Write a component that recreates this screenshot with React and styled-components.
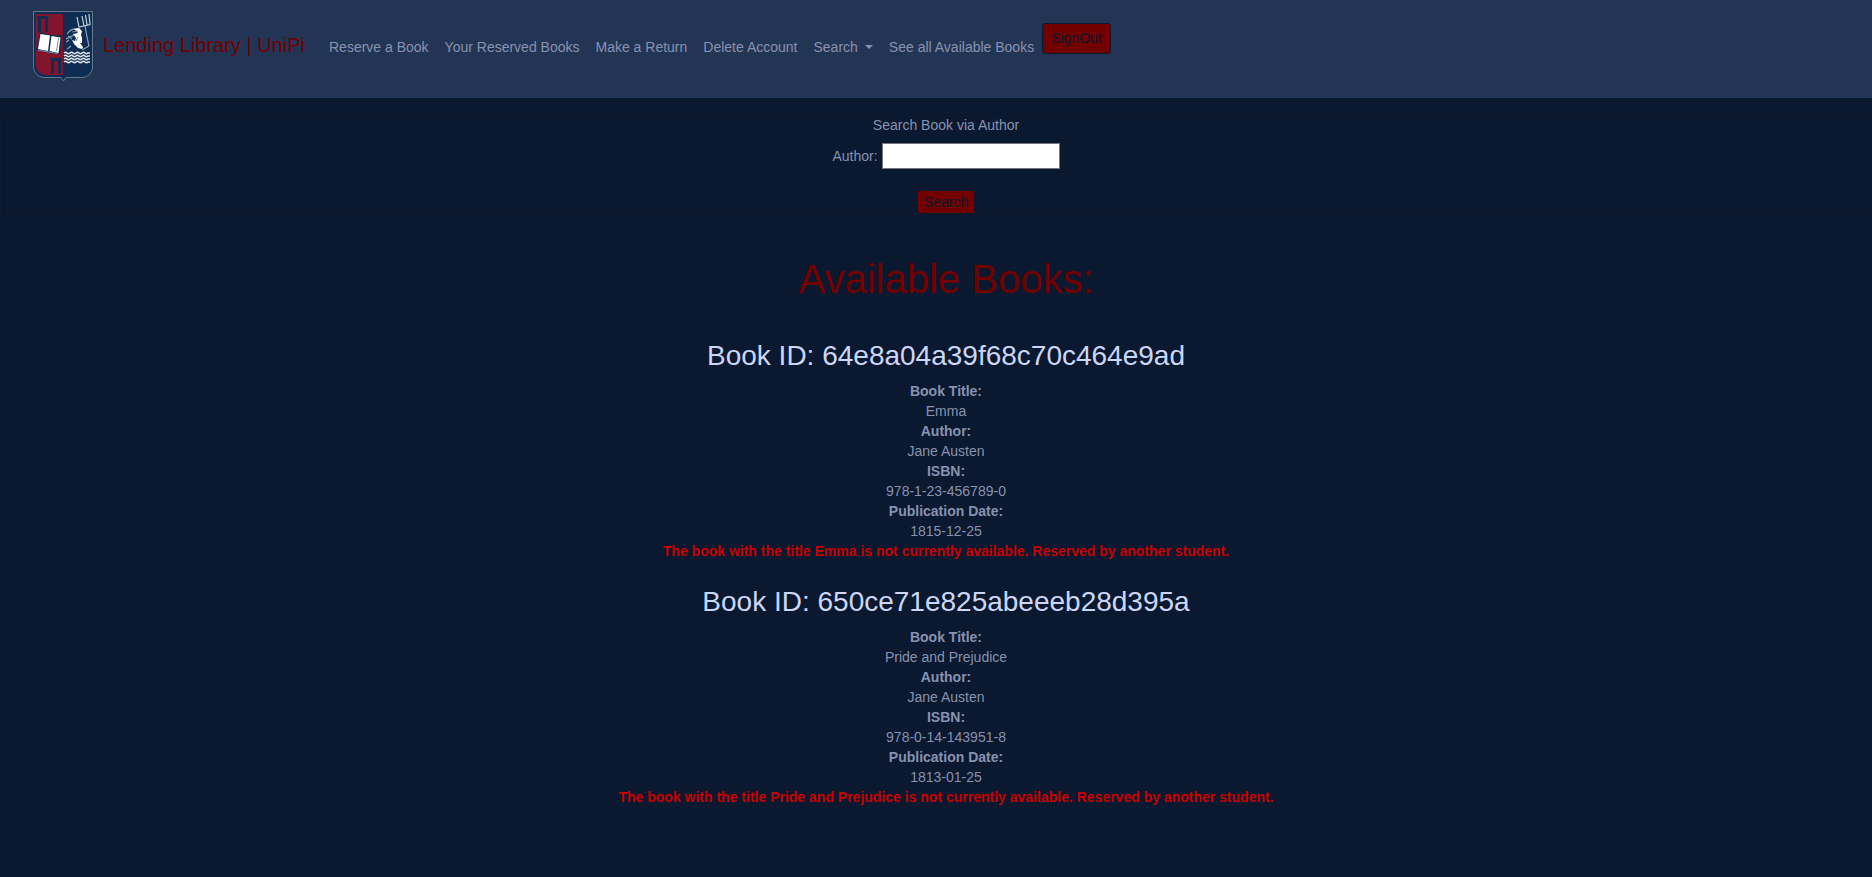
import React from "react";
import styled, { createGlobalStyle } from "styled-components";

const GlobalStyle = createGlobalStyle`
  *, *::before, *::after { box-sizing: border-box; }
  body {
    margin: 0;
    background: #0a192f;
    color: #8892b0;
    font-family: Arial, "Liberation Sans", sans-serif;
    font-size: 14px;
    line-height: 20px;
  }
`;

const Navbar = styled.nav`
  display: flex;
  align-items: flex-start;
  padding: 8px 32px 16px;
  background: #233554;
`;

const Brand = styled.a`
  display: flex;
  align-items: center;
  gap: 9px;
  margin-right: 16px;
  color: #720000;
  font-size: 20px;
  line-height: 32px;
  text-decoration: none;
  white-space: nowrap;
`;

const Crest = styled.svg`
  display: block;
  width: 62px;
  height: 74px;
`;

const NavList = styled.ul`
  display: flex;
  align-items: flex-start;
  margin: 0;
  padding: 15px 0 0;
  list-style: none;
`;

const NavLink = styled.a`
  display: flex;
  align-items: center;
  gap: 7px;
  padding: 14px 8px 8px;
  color: #8892b0;
  text-decoration: none;
  white-space: nowrap;
`;

const Caret = styled.span`
  border-top: 4px solid;
  border-right: 4px solid transparent;
  border-left: 4px solid transparent;
`;

const SignOutButton = styled.button`
  height: 31px;
  padding: 0 8px 2px;
  border: 1px solid #0a192f;
  border-radius: 3px;
  background: #720000;
  color: #0a192f;
  font: inherit;
`;

const Main = styled.main`
  padding: 16px 0 60px;
`;

const SearchForm = styled.form`
  display: flex;
  flex-direction: column;
  align-items: center;
  margin: 0 0 0 3px;
  padding: 0 0 1px 16px;
  border: 1px solid #091629;
  border-right: 0;
  border-radius: 3px 0 0 3px;
`;

const FormTitle = styled.p`
  margin: 0 0 8px;
`;

const Field = styled.div`
  display: flex;
  align-items: center;
  gap: 4px;
  margin-bottom: 22px;
`;

const AuthorInput = styled.input`
  width: 178px;
  height: 26px;
  padding: 1px 2px;
  border: 1px solid #767676;
  background: #fff;
  font: inherit;
`;

const SearchButton = styled.button`
  height: 22px;
  padding: 0 6px;
  border: 0;
  background: #720000;
  color: #0a192f;
  font: inherit;
`;

const Results = styled.section`
  padding: 40px 0 0 20px;
  text-align: center;
`;

const PageTitle = styled.h1`
  margin: 0;
  color: #720000;
  font-size: 40px;
  font-weight: 400;
  line-height: 48px;
`;

const Book = styled.article`
  margin-top: 36px;

  & + & {
    margin-top: 24px;
  }
`;

const BookId = styled.h2`
  margin: 0 0 8px;
  color: #ccd6f6;
  font-size: 28px;
  font-weight: 400;
  line-height: 34px;
`;

const Details = styled.dl`
  margin: 0;
`;

const Term = styled.dt`
  font-weight: 700;
`;

const Value = styled.dd`
  margin: 0;
`;

const Notice = styled.p`
  margin: 0;
  color: #c80000;
  font-weight: 700;
`;

const navItems = [
  { label: "Reserve a Book" },
  { label: "Your Reserved Books" },
  { label: "Make a Return" },
  { label: "Delete Account" },
  { label: "Search", menu: true },
  { label: "See all Available Books" },
];

const books = [
  { id: "64e8a04a39f68c70c464e9ad", title: "Emma", author: "Jane Austen", isbn: "978-1-23-456789-0", date: "1815-12-25" },
  { id: "650ce71e825abeeeb28d395a", title: "Pride and Prejudice", author: "Jane Austen", isbn: "978-0-14-143951-8", date: "1813-01-25" },
];

const waveRows = [45, 48, 51, 54];

function UniversityCrest() {
  return (
    <Crest viewBox="0 0 62 74" aria-hidden="true">
      <path d="M1.5 3.5H60.500V60Q59 68 51 69.500H34L31.500 73L29 69.500H11Q3 68 1.500 60Z" fill="#0f2d52" stroke="#62768e" />
      <path d="M3.500 6H31V67H14Q4 66 3.500 57Z" fill="#82142b" />
      <g fill="none" stroke="#0f2d52" strokeWidth="3">
        <path d="M7.500 24V9.500H14.500V24M20.500 65.500V51.500H27.500V65.500" />
        <path d="M5 9H16.500M18 51H30" strokeWidth="2" />
      </g>
      <path d="M8 24L18 27L30 27L28 46L17 45L4 42Z" fill="#0f2d52" />
      <path d="M8.500 26L18 27.500L16 43L6 41ZM19.500 28L28.500 29.500L26.500 45L17.500 43Z" fill="#fff" />
      <path d="M6 42L16 44L26 45.500M26.500 30L24.500 43" fill="none" stroke="#7d8da4" />
      <g fill="none" stroke="#c6d0da" strokeWidth="1.200">
        <path d="M45 9L47 19L58 16.500L57 6M50 8L52 18M53.500 7L55 17" />
        <path d="M53 18L55 29L57 38" stroke="#93a3b5" />
      </g>
      <g fill="none" stroke="#8fa0b4" strokeWidth="1.200">
        <path d="M35 26Q39 20 46 21M34 31L42 27M36 28L40 31M35 41L39 38M50 42L57 38M34 34L37 32" />
      </g>
      <path d="M42 21L47 20L50 23L49 27L50 30L50 35L48 35L51 39L50 41L46 40L42 36L40 32L43 33L44 30L41 26L46 25Z" fill="#fff" />
      <path d="M40 24L46 23M46 29L44 33" stroke="#6f8298" strokeWidth="1" />
      {waveRows.map((y) => (
        <path
          key={y}
          d={`M32 ${y}q1.500 -1.500 3 0t3 0t3 0t3 0t3 0t3 0t3 0t3 0h2`}
          fill="none"
          stroke="#e1e7ec"
          strokeWidth="1.600"
        />
      ))}
    </Crest>
  );
}

export default function App() {
  return (
    <>
      <GlobalStyle />
      <Navbar>
        <Brand href="#">
          <UniversityCrest />
          Lending Library | UniPi
        </Brand>
        <NavList>
          {navItems.map((item) => (
            <li key={item.label}>
              <NavLink href="#">
                {item.label}
                {item.menu && <Caret />}
              </NavLink>
            </li>
          ))}
          <li>
            <SignOutButton type="button">SignOut</SignOutButton>
          </li>
        </NavList>
      </Navbar>
      <Main>
        <SearchForm onSubmit={(event) => event.preventDefault()}>
          <FormTitle>Search Book via Author</FormTitle>
          <Field>
            <label htmlFor="author">Author:</label>
            <AuthorInput id="author" type="text" />
          </Field>
          <SearchButton type="submit">Search</SearchButton>
        </SearchForm>
        <Results>
          <PageTitle>Available Books:</PageTitle>
          {books.map((book) => (
            <Book key={book.id}>
              <BookId>Book ID: {book.id}</BookId>
              <Details>
                <Term>Book Title:</Term>
                <Value>{book.title}</Value>
                <Term>Author:</Term>
                <Value>{book.author}</Value>
                <Term>ISBN:</Term>
                <Value>{book.isbn}</Value>
                <Term>Publication Date:</Term>
                <Value>{book.date}</Value>
              </Details>
              <Notice>
                The book with the title {book.title} is not currently available. Reserved by another student.
              </Notice>
            </Book>
          ))}
        </Results>
      </Main>
    </>
  );
}
